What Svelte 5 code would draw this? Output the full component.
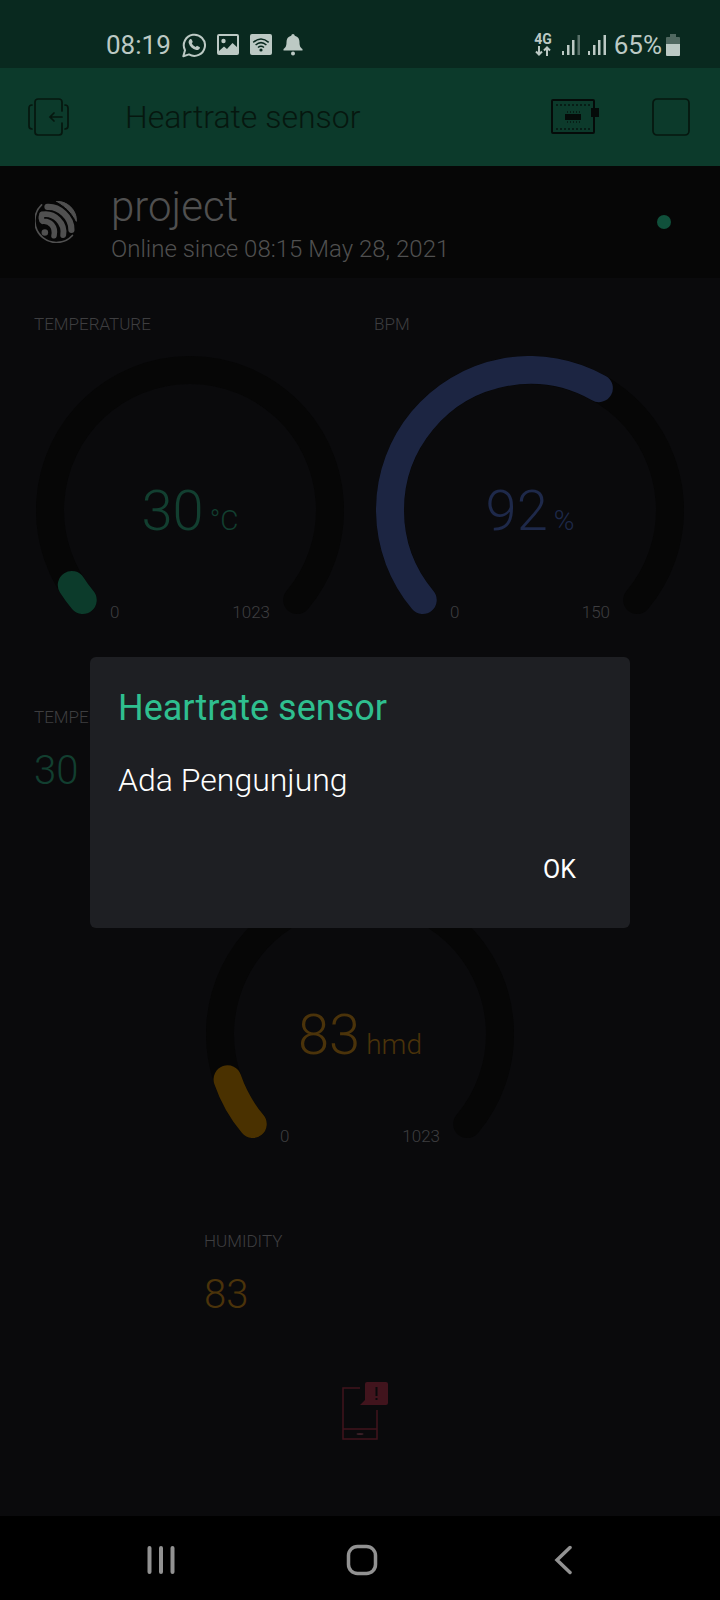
<script>
  const RADIUS = 140;
  const START = 140;
  const SWEEP = 260;

  const gauges = [
    { label: 'TEMPERATURE', value: 30, unit: '°C', min: 0, max: 1023, tone: 'green', place: 'g-left' },
    { label: 'BPM', value: 92, unit: '%', min: 0, max: 150, tone: 'blue', place: 'g-right' },
    { label: '', value: 83, unit: 'hmd', min: 0, max: 1023, tone: 'amber', place: 'g-middle' }
  ];

  const readings = [
    { label: 'TEMPERATURE', value: 30, tone: 'green', place: 'r-left' },
    { label: 'HUMIDITY', value: 83, tone: 'amber', place: 'r-middle' }
  ];

  function point(angle) {
    const rad = (angle * Math.PI) / 180;
    return `${(154 + RADIUS * Math.cos(rad)).toFixed(2)} ${(154 + RADIUS * Math.sin(rad)).toFixed(2)}`;
  }

  function arc(fraction) {
    const sweep = SWEEP * fraction;
    return `M${point(START)} A${RADIUS} ${RADIUS} 0 ${sweep > 180 ? 1 : 0} 1 ${point(START + sweep)}`;
  }

  let open = $state(true);
</script>

<div class="app">
  <div class="status">
    <div class="group left">
      <span class="clock">08:19</span>
      <svg width="24" height="26" viewBox="0 0 24 26" fill="none" aria-hidden="true">
        <path d="M1.3 24.2 L3 18.2 A10.6 10.6 0 1 1 7 22.4 Z" stroke="currentColor" stroke-width="2" stroke-linejoin="round" />
        <path d="M8 7.2c.5-.5 1.400-.4 1.700.2l.9 2c.2.5 0 .9-.8 1.800.8 1.700 2.200 3 4 3.800.8-.9 1.100-1.300 1.600-1.100l2.100 1c.5.300.5.800.3 1.400-.5 1.400-2.100 2-3.500 1.700-3.800-.9-6.600-3.500-7.600-7-.3-1.400.2-2.900 1.300-3.800z" fill="currentColor" />
      </svg>
      <svg width="22" height="21" viewBox="0 0 22 21" fill="none" aria-hidden="true">
        <rect x="1" y="1" width="20" height="19" rx="1" stroke="currentColor" stroke-width="2" />
        <circle cx="6.500" cy="7" r="2.200" fill="currentColor" />
        <path d="M2 17 L7 12.500 L10 15 L15.500 9 L21 14 V20 H2Z" fill="currentColor" />
      </svg>
      <svg width="22" height="21" viewBox="0 0 22 21" fill="none" aria-hidden="true">
        <rect width="22" height="21" rx="2" fill="currentColor" />
        <g stroke="#09291f" stroke-width="1.600">
          <path d="M3.300 8.300 Q11 1.700 18.700 8.300" />
          <path d="M5.600 11 Q11 6.300 16.400 11" />
          <path d="M8 13.500 Q11 11 14 13.500" />
        </g>
        <circle cx="11" cy="16" r="1.600" fill="#09291f" />
      </svg>
      <svg width="20" height="22" viewBox="0 0 20 22" fill="currentColor" aria-hidden="true">
        <path d="M10 0a2 2 0 0 1 1.800 1.700C15.200 2.500 16.500 5 16.500 8c0 4 .8 5.500 3 7v1.500H.5V15c2.200-1.500 3-3 3-7 0-3 1.300-5.500 4.700-6.300A2 2 0 0 1 10 0z" />
        <circle cx="10" cy="19.600" r="2" />
      </svg>
    </div>
    <div class="group right">
      <span class="net">
        <span>4G</span>
        <svg width="16" height="10" viewBox="0 0 16 10" fill="none" stroke="currentColor" stroke-width="2" aria-hidden="true">
          <path d="M4 0V9M1 5.500L4 8.500L7 5.500M12 10V1M9 4.500L12 1.500L15 4.500" />
        </svg>
      </span>
      <svg width="18" height="20" viewBox="0 0 18 20" fill="currentColor" aria-hidden="true">
        <rect y="16" width="2" height="4" /><rect x="5" y="10" width="2.500" height="10" />
        <rect x="10" y="5" width="2.500" height="15" /><rect x="15.500" width="2.500" height="20" opacity=".45" />
      </svg>
      <svg width="18" height="20" viewBox="0 0 18 20" fill="currentColor" aria-hidden="true">
        <rect y="16" width="2" height="4" /><rect x="5" y="10" width="2.500" height="10" />
        <rect x="10" y="5" width="2.500" height="15" /><rect x="15.500" width="2.500" height="20" />
      </svg>
      <span class="battery">65%
        <svg width="14" height="22" viewBox="0 0 14 22" fill="currentColor" aria-hidden="true">
          <path d="M4 0H10V3H13Q14 3 14 4V10H0V4Q0 3 1 3H4Z" opacity=".4" />
          <path d="M0 10H14V21Q14 22 13 22H1Q0 22 0 21Z" />
        </svg>
      </span>
    </div>
  </div>

  <div class="screen">
    <header class="bar">
      <button class="icon" aria-label="Exit project">
        <svg width="42" height="40" viewBox="0 0 42 40" fill="none" stroke="currentColor" stroke-width="1.700" stroke-linecap="round">
          <path d="M34 14V5a3 3 0 0 0-3-3H10a3 3 0 0 0-3 3V35a3 3 0 0 0 3 3H31a3 3 0 0 0 3-3V26" />
          <path d="M34 20H22M26 16L22 20L26 24" />
          <path d="M4 8Q1 8 1 11V29Q1 32 4 32M37 8Q40 8 40 11V29Q40 32 37 32" />
        </svg>
      </button>
      <h1>Heartrate sensor</h1>
      <button class="icon chip" aria-label="Devices">
        <svg width="48" height="36" viewBox="0 0 48 36" fill="none">
          <rect x="1" y="1" width="42" height="33" rx="1" stroke="currentColor" stroke-width="2" />
          <path d="M5 6H39M5 30H39" stroke="currentColor" stroke-width="1.500" stroke-dasharray="2 2" opacity=".8" />
          <path d="M16 13H29M16 23H29" stroke="currentColor" stroke-width="2" stroke-dasharray="1 2" opacity=".6" />
          <rect x="14" y="15" width="16" height="6" fill="currentColor" />
          <rect x="40" y="9" width="8" height="9" fill="currentColor" />
        </svg>
      </button>
      <button class="icon" aria-label="Stop">
        <svg width="38" height="38" viewBox="0 0 38 38" fill="none">
          <rect x="1" y="1" width="36" height="36" rx="4" stroke="currentColor" stroke-width="1.700" />
        </svg>
      </button>
    </header>

    <section class="device">
      <svg width="42" height="42" viewBox="0 0 128 128" fill="none" stroke="currentColor" stroke-linecap="round" aria-hidden="true">
        <path d="M20 12 A67 67 0 0 0 23 111 A66 66 0 0 0 114 105" stroke-width="5" />
        <path d="M66 1 C98 -1 129 29 126 62 C115 40 97 18 66 1Z" fill="currentColor" stroke-width="3" stroke-linejoin="round" />
        <path d="M38 18 C74 16 112 50 111 88" stroke-width="19" />
        <path d="M22 41 C60 34 92 68 86 104" stroke-width="18" />
        <path d="M22 42 C18 48 18 58 24 62 C46 60 64 78 58 106" stroke-width="17" stroke-linejoin="round" />
        <circle cx="30" cy="96" r="10" fill="currentColor" stroke="none" />
      </svg>
      <div class="about">
        <h2>project</h2>
        <p>Online since 08:15 May 28, 2021</p>
      </div>
      <span class="dot"></span>
    </section>

    <main class="board">
      {#each gauges as g}
        <section class="widget {g.place} {g.tone}">
          <h3>{g.label}</h3>
          <div class="gauge">
            <svg viewBox="0 0 308 258" fill="none" stroke-width="28" stroke-linecap="round" aria-hidden="true">
              <path class="track" d={arc(1)} />
              <path class="fill" d={arc(g.value / g.max)} />
            </svg>
            <div class="face">
              <div class="amount"><span>{g.value}</span><small>{g.unit}</small></div>
              <div class="scale"><span>{g.min}</span><span>{g.max}</span></div>
            </div>
          </div>
        </section>
      {/each}
      {#each readings as r}
        <section class="widget {r.place} {r.tone}">
          <h3>{r.label}</h3>
          <div class="reading">{r.value}</div>
        </section>
      {/each}
      <div class="notify">
        <svg width="46" height="58" viewBox="0 0 46 58" fill="none" aria-hidden="true">
          <path d="M18 6H1V57H35V28M1 47H35" stroke="currentColor" stroke-width="1.500" />
          <ellipse cx="18" cy="52" rx="3.500" ry="1" fill="#3b2027" />
          <path d="M23 2Q23 0 25 0H44Q46 0 46 2V21Q46 23 44 23H18L23 18Z" fill="currentColor" />
          <path d="M34.500 5V14M34.500 16V18" stroke="#0a0a0c" stroke-width="2" />
        </svg>
      </div>
    </main>

    {#if open}
      <div class="overlay">
        <div class="dialog" role="alertdialog" aria-labelledby="dlg-title" aria-describedby="dlg-text">
          <h2 id="dlg-title">Heartrate sensor</h2>
          <p id="dlg-text">Ada Pengunjung</p>
          <button onclick={() => (open = false)}>OK</button>
        </div>
      </div>
    {/if}
  </div>

  <nav class="keys">
    <button aria-label="Recent apps">
      <svg width="28" height="30" viewBox="0 0 28 30" stroke="currentColor" stroke-width="4" stroke-linecap="round">
        <path d="M2.500 3V27M14 3V27M25.500 3V27" />
      </svg>
    </button>
    <button aria-label="Home">
      <svg width="32" height="32" viewBox="0 0 32 32" fill="none" stroke="currentColor" stroke-width="3.500">
        <rect x="2.500" y="2.500" width="27" height="27" rx="9" />
      </svg>
    </button>
    <button aria-label="Back">
      <svg width="18" height="30" viewBox="0 0 18 30" fill="none" stroke="currentColor" stroke-width="3.500" stroke-linecap="round">
        <path d="M16 2.500L3 15L16 27.500" />
      </svg>
    </button>
  </nav>
</div>

<style>
  :global(body) {
    background: #0a0a0c;
  }
  .app {
    display: flex;
    flex-direction: column;
    min-height: 100vh;
    font-family: Roboto, 'Liberation Sans', sans-serif;
    font-weight: 300;
  }
  h1, h2, h3, p {
    margin: 0;
    font-weight: 300;
  }
  svg {
    display: block;
    flex: none;
  }
  button {
    border: 0;
    padding: 0;
    background: none;
    color: inherit;
    font: inherit;
    cursor: pointer;
  }

  .status {
    display: flex;
    justify-content: space-between;
    align-items: center;
    box-sizing: border-box;
    height: 68px;
    padding: 21px 40px 0 106px;
    background: #09291f;
    color: #bcc9c4;
    font-size: 26px;
    font-weight: 400;
    line-height: 30px;
  }
  .group {
    display: flex;
    align-items: center;
    gap: 11px;
  }
  .group.right {
    gap: 8px;
  }
  .net {
    display: flex;
    flex-direction: column;
    align-items: center;
    gap: 1px;
    padding-right: 2px;
    font-size: 14px;
    font-weight: 700;
    line-height: 12px;
  }
  .battery {
    display: flex;
    align-items: center;
    gap: 4px;
  }

  .screen {
    position: relative;
    display: flex;
    flex: 1;
    flex-direction: column;
  }
  .bar {
    display: flex;
    align-items: center;
    height: 98px;
    padding: 0 30px 0 28px;
    background: #0c3a2b;
    color: #06170f;
  }
  .bar h1 {
    flex: 1;
    padding-left: 55px;
    font-size: 32px;
    line-height: 40px;
  }
  .chip {
    margin-right: 53px;
    color: #050b09;
  }

  .device {
    display: flex;
    align-items: center;
    height: 112px;
    padding: 0 49px 0 35px;
    background: #060606;
    color: #505050;
  }
  .about {
    flex: 1;
    padding: 6px 0 0 34px;
  }
  .about h2 {
    font-size: 42px;
    line-height: 48px;
  }
  .about p {
    font-size: 24px;
    line-height: 36px;
  }
  .dot {
    width: 14px;
    height: 14px;
    border-radius: 50%;
    background: #10503b;
  }

  .board {
    display: grid;
    grid-template-columns: repeat(8, 1fr);
    grid-auto-rows: minmax(131px, auto);
    padding: 35px 20px 0;
  }
  .g-left { grid-area: 1 / 1 / 4 / 5; }
  .g-right { grid-area: 1 / 5 / 4 / 9; }
  .r-left { grid-area: 4 / 1 / 5 / 5; }
  .g-middle { grid-area: 5 / 3 / 8 / 7; }
  .r-middle { grid-area: 8 / 3 / 9 / 7; }
  .notify {
    display: flex;
    grid-area: 9 / 4 / 10 / 6;
    justify-content: center;
    padding: 21px 0 0 10px;
    color: #41141d;
  }
  .widget {
    padding: 0 14px;
  }
  .widget h3 {
    min-height: 22px;
    color: #3e3e40;
    font-size: 17px;
    line-height: 22px;
  }
  .green { color: #123f30; --fill: #0c3b2b; }
  .blue { color: #1e294a; --fill: #1c2542; }
  .amber { color: #4b330a; --fill: #4a3100; }
  .gauge {
    display: grid;
    margin: 21px 2px 0;
  }
  .gauge svg {
    grid-area: 1 / 1;
    width: 100%;
  }
  .track { stroke: #060606; }
  .fill { stroke: var(--fill); }
  .face {
    display: flex;
    flex-direction: column;
    grid-area: 1 / 1;
    justify-content: space-between;
    height: 142px;
    padding-top: 125px;
  }
  .amount {
    display: flex;
    justify-content: center;
    align-items: baseline;
    gap: 6px;
    font-size: 56px;
    line-height: 60px;
  }
  .amount small {
    font-size: 28px;
    line-height: 30px;
  }
  .scale {
    display: flex;
    justify-content: space-between;
    padding: 0 74px;
    color: #3e3e40;
    font-size: 17px;
    line-height: 22px;
  }
  .reading {
    margin-top: 17px;
    font-size: 40px;
    line-height: 52px;
  }

  .overlay {
    position: absolute;
    inset: 0;
    display: flex;
    align-items: center;
    justify-content: center;
  }
  .dialog {
    display: flex;
    flex-direction: column;
    box-sizing: border-box;
    width: 75%;
    padding: 28px 28px 34px;
    border-radius: 6px;
    background: #1e1f23;
    color: #fff;
  }
  .dialog h2 {
    color: #2fbf8f;
    font-size: 36px;
    font-weight: 400;
    line-height: 46px;
  }
  .dialog p {
    margin-top: 29px;
    font-size: 32px;
    line-height: 40px;
  }
  .dialog button {
    align-self: flex-end;
    margin-top: 46px;
    padding: 0 26px;
    font-size: 25px;
    font-weight: 400;
    line-height: 48px;
  }

  .keys {
    display: grid;
    grid-template-columns: repeat(3, 1fr);
    height: 84px;
    padding: 0 56px 0 60px;
    background: #000;
    color: #929292;
  }
  .keys button {
    display: flex;
    align-items: center;
    justify-content: center;
    padding-top: 4px;
  }
</style>
